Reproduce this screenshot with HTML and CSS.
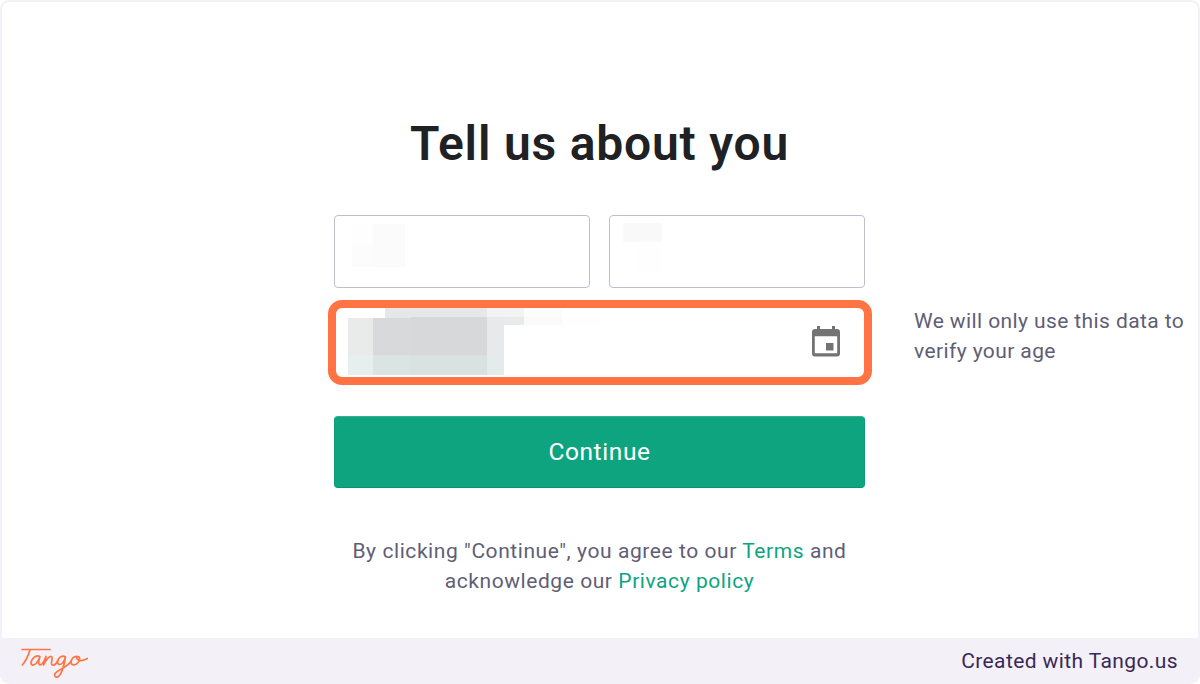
FILE: index.html
```html
<!DOCTYPE html>
<html lang="en">
	<head>
		<meta charset="UTF-8">
		<title>Tell us about you</title>
		<link rel="stylesheet" href="styles.css">
	</head>
	<body>
		<div class="frame">
			<div class="content">
				<h1>Tell us about you</h1>
				<div class="names">
					<div class="field">
						<svg width="240" height="68" viewBox="336 217 240 68" shape-rendering="crispEdges">
							<rect x="352" y="224" width="21" height="20" fill="#fefefe"/>
							<rect x="352" y="244" width="21" height="23" fill="#fcfcfc"/>
							<rect x="373" y="224" width="32" height="43" fill="#fbfbfb"/>
						</svg>
					</div>
					<div class="field">
						<svg width="240" height="68" viewBox="611 217 240 68" shape-rendering="crispEdges">
							<rect x="623" y="223" width="39" height="19" fill="#f9f9f9"/>
							<rect x="638" y="242" width="23" height="29" fill="#fefefe"/>
						</svg>
					</div>
				</div>
				<div class="birthday">
					<!-- hidden date value -->
					<svg width="300" height="69" viewBox="336 308 300 69" shape-rendering="crispEdges">
						<rect x="385" y="308" width="26" height="10" fill="#e6e7e9"/>
						<rect x="411" y="308" width="76" height="9" fill="#e7e7e7"/>
						<rect x="487" y="308" width="37" height="9" fill="#f3f3f3"/>
						<rect x="524" y="308" width="38" height="9" fill="#fcfcfc"/>
						<rect x="348" y="318" width="25" height="37" fill="#e9ebea"/>
						<rect x="373" y="318" width="38" height="37" fill="#d8d9db"/>
						<rect x="411" y="317" width="76" height="38" fill="#d7d8da"/>
						<rect x="487" y="317" width="17" height="38" fill="#e8e9ea"/>
						<rect x="504" y="317" width="20" height="8" fill="#e9eaeb"/>
						<rect x="524" y="317" width="38" height="8" fill="#fafafa"/>
						<rect x="562" y="317" width="38" height="9" fill="#fefefe"/>
						<rect x="348" y="355" width="25" height="20" fill="#e7eeee"/>
						<rect x="373" y="355" width="38" height="20" fill="#dae4e3"/>
						<rect x="411" y="355" width="76" height="20" fill="#d9e2e1"/>
						<rect x="487" y="355" width="17" height="20" fill="#e3ecea"/>
					</svg>
					<svg class="calendar" width="28" height="31" viewBox="0 0 28 31">
						<path fill="#737373" fill-rule="evenodd" d="M5 0h3v3h12V0h3v3h2a3 3 0 0 1 3 3v21.500a3 3 0 0 1-3 3H3a3 3 0 0 1-3-3V6a3 3 0 0 1 3-3h2zM2.800 10.300v17h22.400V10.300z"/>
						<rect x="14" y="17" width="7.500" height="7.500" fill="#737373"/>
					</svg>
					<p class="hint">We will only use this data to<br>verify your age</p>
				</div>
				<button class="continue">Continue</button>
				<p class="legal">By clicking "Continue", you agree to our <a>Terms</a> and<br>acknowledge our <a>Privacy policy</a></p>
			</div>
			<div class="footer">
				<svg class="logo" role="img" aria-label="Tango" width="70" height="32" viewBox="20 647 70 32">
					<g fill="none" stroke="#ff7442" stroke-width="1.700" stroke-linecap="round" stroke-linejoin="round">
						<path d="M22 649.500H50"/>
						<path d="M30 649.800C28.500 655 26 661 22.300 665"/>
						<path d="M40 656.800C37 654.500 32.500 657.500 31.200 661.500C30.200 665 33 666.300 36 663.500C38 661.500 39.200 659 40 656.800C38.800 660 37.800 664.800 40 664.900C42.200 665 44.500 660.500 46 656.500C45.600 659.500 44.500 662.500 43.500 665C45.500 660.500 49 656 51.300 656.500C53.800 657.300 50 663.500 52 664.800C54.500 665.800 57 662.500 58 660.500"/>
						<path d="M65.500 657C62.500 654.800 58.500 657.500 57.600 661C57 664.800 60 665.500 62.500 663C64.200 661 65 659 65.500 657C64.500 663 62.500 672.500 59 676C56.500 678.300 53.500 676.500 55 673.500C57.500 669.500 67.500 667.500 71.200 661"/>
						<path d="M77.500 656.700C74 655.500 71 659.500 71 662C71 665.500 75 665.800 77.700 663C80.500 660 80.200 656.500 77.500 656.700C75.500 657.500 77.500 661 81 660.700C83.500 660.500 85.500 659.500 87.300 658.500"/>
					</g>
				</svg>
				<span class="credit">Created with Tango.us</span>
			</div>
		</div>
	</body>
</html>
```
FILE: styles.css
```css
*{
	box-sizing: border-box;
}
body{
	margin: 0;
	background: #fff;
	font-family: Roboto, "Liberation Sans", sans-serif;
	color: #5f5e76;
}
.frame{
	width: 1200px;
	height: 684px;
	border: 2px solid #f3f1f7;
	border-bottom: 0;
	border-radius: 9px;
	overflow: hidden;
	display: flex;
	flex-direction: column;
}
.content{
	flex: 1;
	width: 531px;
	margin-left: 332px;
	padding-top: 112px;
}
h1{
	margin: 0;
	height: 60px;
	line-height: 59px;
	font-size: 48px;
	font-weight: 600;
	letter-spacing: 0.8px;
	text-align: center;
	color: #202124;
	white-space: nowrap;
}
.names{
	display: flex;
	gap: 19px;
	margin-top: 41px;
}
.field{
	flex: 1;
	height: 73px;
	border: 1px solid #c0bdd0;
	border-radius: 4px;
	padding: 1px;
}
.field svg{
	display: block;
}
.birthday{
	width: 544px;
	height: 85px;
	margin: 12px 0 0 -6px;
	border: 8px solid #ff7442;
	border-radius: 14px;
	display: flex;
	align-items: center;
}
.birthday svg{
	flex: none;
}
.calendar{
	margin-left: 176px;
	margin-top: -3px;
}
.hint{
	flex: none;
	margin: -14px 0 0 74px;
	font-size: 21px;
	line-height: 30px;
	letter-spacing: 0.4px;
	white-space: nowrap;
}
.continue{
	display: block;
	width: 531px;
	height: 72px;
	margin-top: 31px;
	padding: 0 0 1px;
	border: 1px solid #079669;
	border-color: #3cad8b #0a9c77 #079669;
	border-radius: 4px;
	background: #0ea47f;
	color: #fff;
	font-family: inherit;
	font-size: 24.5px;
	letter-spacing: 0.6px;
}
.legal{
	margin: 48px 0 0;
	font-size: 21px;
	line-height: 30px;
	letter-spacing: 0.57px;
	text-align: center;
	white-space: nowrap;
}
.legal a{
	color: #0ea47f;
}
.footer{
	height: 46px;
	padding: 0 20px 0 18px;
	background: #f3f1f7;
	display: flex;
	align-items: center;
	justify-content: space-between;
}
.logo{
	margin-top: 4px;
}
.credit{
	font-size: 21px;
	letter-spacing: 0.4px;
	color: #3a2856;
}
```
